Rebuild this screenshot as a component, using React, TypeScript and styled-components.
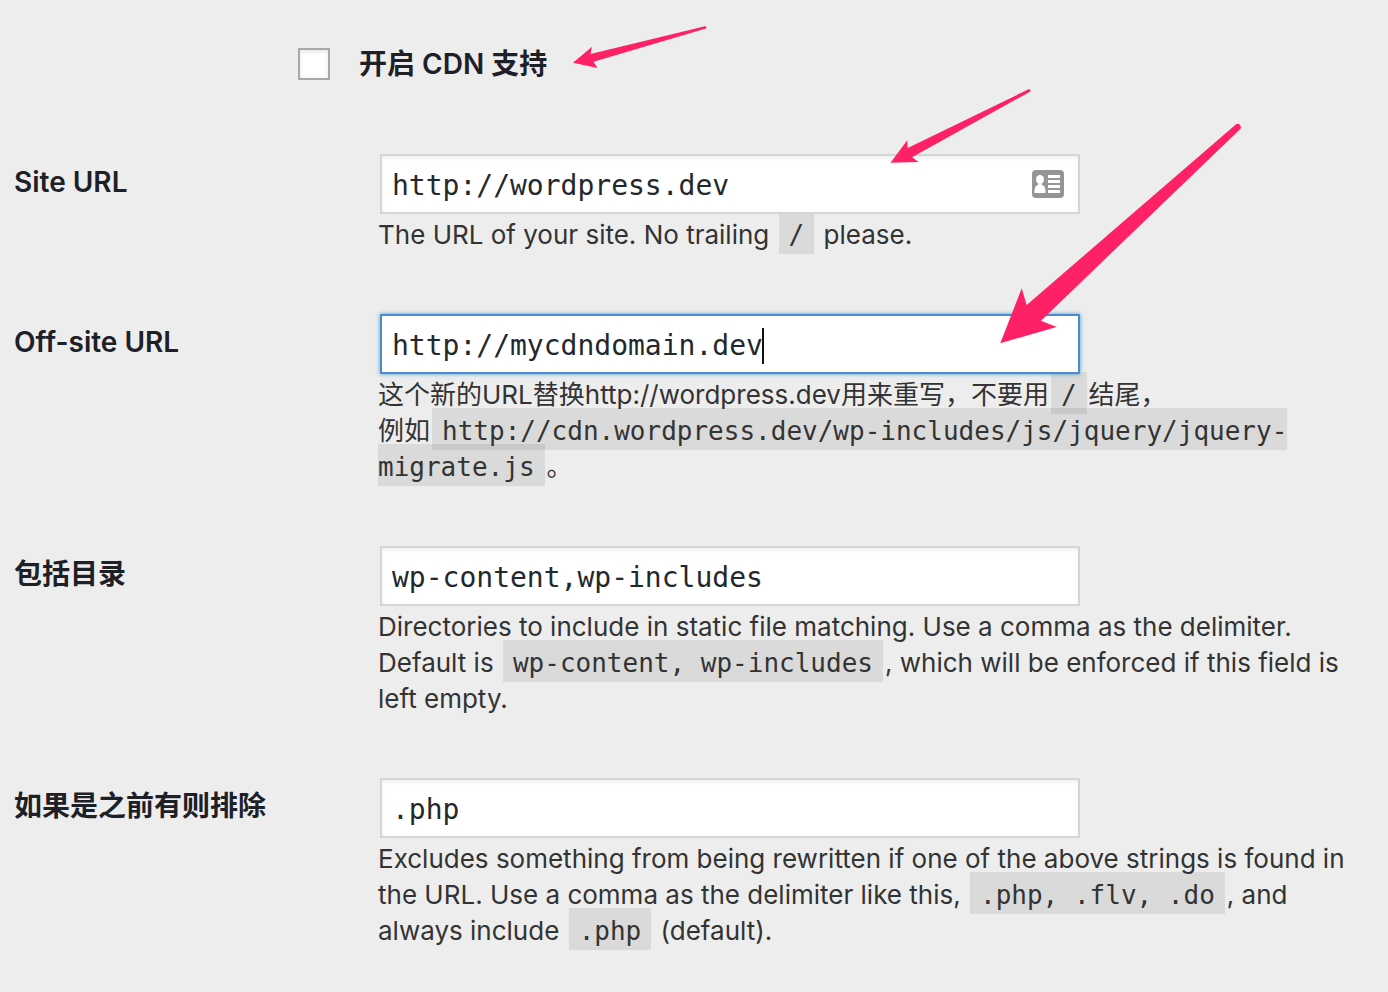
import React from 'react';
import styled, { createGlobalStyle, css } from 'styled-components';

const sans = `Inter, "Noto Sans CJK SC", sans-serif`;
const mono = `"DejaVu Sans Mono", "Noto Sans CJK SC", monospace`;

const GlobalStyle = createGlobalStyle`
  * { box-sizing: border-box; }
  body {
    margin: 0;
    background: #ededed;
    color: #333;
    font-family: ${sans};
    font-size: 26px;
    line-height: 36px;
  }
`;

const Page = styled.main`
  position: relative;
  padding: 0 20px 0 14px;
`;

const Toggle = styled.label`
  display: flex;
  align-items: center;
  gap: 29px;
  padding: 46px 0 40px 284px;
  color: #1d2127;
  font-size: 28px;
  font-weight: 600;
`;

const Checkbox = styled.input`
  appearance: none;
  width: 32px;
  height: 32px;
  margin: 0;
  border: 2px solid #a7a7ac;
  background: #fff;
  box-shadow: inset 0 2px 4px rgba(0, 0, 0, 0.1);
`;

const Row = styled.div`
  display: grid;
  grid-template-columns: 364px minmax(0, 1fr);
`;

const RowLabel = styled.label`
  padding-top: 42px;
  color: #1d2127;
  font-size: 28px;
  font-weight: 600;
`;

const Cell = styled.div`
  padding: 30px 0 29px;
`;

const Field = styled.div`
  position: relative;
  max-width: 704px;
  padding: 2px;
  font-family: ${mono};
  font-size: 28px;
`;

const TextInput = styled.input<{ $active?: boolean }>`
  display: block;
  width: 100%;
  height: 60px;
  margin: 0;
  padding: 8px 10px 5px;
  border: 2px solid #d5d5d5;
  border-radius: 0;
  outline: none;
  background: #fff;
  box-shadow: inset 0 2px 4px rgba(0, 0, 0, 0.07);
  color: #23282d;
  font: inherit;
  ${({ $active }) =>
    $active &&
    css`
      border-color: #4a8bd2;
      box-shadow: 0 0 4px rgba(30, 140, 190, 0.8);
    `}
`;

const Caret = styled.span`
  position: absolute;
  top: 16px;
  left: calc(13px + 22ch);
  width: 2px;
  height: 36px;
  background: #111;
`;

const ContactIcon = styled.svg`
  position: absolute;
  top: 18px;
  right: 18px;
  width: 32px;
  height: 28px;
`;

const Description = styled.p`
  margin: 0;
  padding-top: 1px;
`;

const Code = styled.code`
  margin: 0 2px;
  padding: 8px 10px 4px;
  background: rgba(0, 0, 0, 0.08);
  font-family: ${mono};
  font-size: 26px;
`;

const Arrows = styled.svg`
  position: absolute;
  top: 0;
  left: 0;
  pointer-events: none;
`;

type SettingProps = {
  id: string;
  label: string;
  value: string;
  active?: boolean;
  overlay?: React.ReactNode;
  children: React.ReactNode;
};

function Setting({ id, label, value, active, overlay, children }: SettingProps) {
  return (
    <Row>
      <RowLabel htmlFor={id}>{label}</RowLabel>
      <Cell>
        <Field>
          <TextInput id={id} type="text" defaultValue={value} $active={active} spellCheck={false} />
          {overlay}
        </Field>
        <Description>{children}</Description>
      </Cell>
    </Row>
  );
}

const contactCard = (
  <ContactIcon viewBox="0 0 32 28" aria-hidden="true">
    <rect width="32" height="28" rx="4" fill="#959595" />
    <ellipse cx="8" cy="9.5" rx="4" ry="4.5" fill="#fff" />
    <path d="M6.5 12h3v2.500c2.500 1 4 3 4 6V23h-11v-2.500c0-3 1.500-5 4-6z" fill="#fff" />
    <path d="M16 5h12v3H16zM16 10h12v3H16zM16 15h12v3H16zM16 20h12v3H16z" fill="#fff" />
  </ContactIcon>
);

export default function App() {
  return (
    <>
      <GlobalStyle />
      <Page>
        <Toggle>
          <Checkbox type="checkbox" />
          开启 CDN 支持
        </Toggle>
        <Setting id="site-url" label="Site URL" value="http://wordpress.dev" overlay={contactCard}>
          The URL of your site. No trailing <Code>/</Code> please.
        </Setting>
        <Setting
          id="offsite-url"
          label="Off-site URL"
          value="http://mycdndomain.dev"
          active
          overlay={<Caret />}
        >
          这个新的URL替换http://wordpress.dev用来重写，不要用<Code>/</Code>结尾，
          <br />
          例如<Code>http://cdn.wordpress.dev/wp-includes/js/jquery/jquery-migrate.js</Code>。
        </Setting>
        <Setting id="include-dirs" label="包括目录" value="wp-content,wp-includes">
          Directories to include in static file matching. Use a comma as the delimiter. Default is{' '}
          <Code>wp-content, wp-includes</Code>, which will be enforced if this field is left empty.
        </Setting>
        <Setting id="exclude" label="如果是之前有则排除" value=".php">
          Excludes something from being rewritten if one of the above strings is found in the URL. Use a
          comma as the delimiter like this, <Code>.php, .flv, .do</Code>, and always include{' '}
          <Code>.php</Code> (default).
        </Setting>
        <Arrows width="1260" height="360" viewBox="0 0 1260 360" fill="#ff2166" aria-hidden="true">
          <path d="M573 62.7L592 46.7L590.5 54L705 26.2Q707.5 26.5 706 28.5L593.5 61.7L597.5 68z" />
          <path d="M890.5 162.8L907.2 140.3L907.7 148L1028.5 89.3Q1031.5 89.2 1030 91.7L912 157.3L918.7 162z" />
          <path d="M1000.3 343.2L1021.7 288.3L1026.7 305L1235.5 124.7Q1238 122.8 1240 125Q1242 127.5 1239.8 129.5L1041 320.7L1056.7 327z" />
        </Arrows>
      </Page>
    </>
  );
}
